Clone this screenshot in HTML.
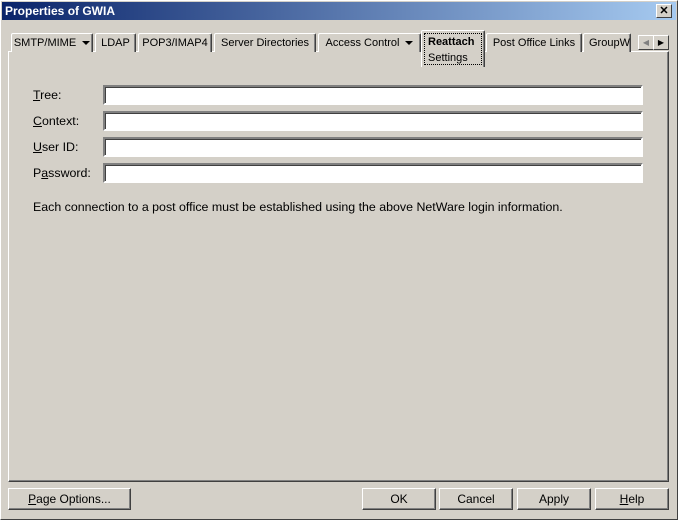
<html><head><style>
body{margin:0;width:678px;height:520px;background:#d4d0c8;font-family:"Liberation Sans",sans-serif;font-size:12.4px;position:relative;overflow:hidden}
.a{position:absolute}
.win{left:0;top:0;width:676px;height:518px;border:1px solid;border-color:#fff #404040 #404040 #fff}
.title{left:2px;top:2px;width:674px;height:18px;background:linear-gradient(90deg,#0a246a,#a6caf0);color:#fff;font-weight:bold;font-size:12px;line-height:18px;text-indent:3px}
.x{left:656px;top:4px;width:14px;height:12px;background:#d4d0c8;border:1px solid;border-color:#fff #404040 #404040 #fff;color:#000;font-size:11px;line-height:12px;text-align:center;font-weight:bold}
.panel{left:8px;top:51px;width:659px;height:429px;border:1px solid;border-color:#fff #404040 #404040 #fff;box-shadow:inset -1px -1px 0 #808080}
.tab{top:33px;height:18px;border:1px solid;border-bottom:none;border-color:#fff #404040 #fff #fff;box-shadow:inset -1px 0 0 #808080;border-radius:2px 2px 0 0;line-height:18px;text-align:center;white-space:nowrap;overflow:hidden;background:#d4d0c8;font-size:11px}
.lbl{left:33px}
.in{left:103px;width:536px;height:16px;background:#fff;border:2px solid;border-color:#808080 #fff #fff #808080;box-shadow:inset 1px 1px 0 #404040}
.btn{top:488px;height:20px;border:1px solid;border-color:#fff #404040 #404040 #fff;box-shadow:inset -1px -1px 0 #808080;text-align:center;line-height:20px;font-size:12px}
u{text-decoration:underline}
.tri{display:inline-block;width:0;height:0;border-left:4px solid transparent;border-right:4px solid transparent;border-top:4px solid #000;margin-left:6px;vertical-align:middle}
</style></head><body>
<div class="a win"></div>
<div class="a title">Properties of GWIA</div>
<div class="a x">✕</div>
<div class="a panel"></div>
<div class="a tab" style="left:11px;width:80px">SMTP/MIME<span class="tri"></span></div>
<div class="a tab" style="left:95px;width:39px">LDAP</div>
<div class="a tab" style="left:138px;width:72px">POP3/IMAP4</div>
<div class="a tab" style="left:214px;width:100px">Server Directories</div>
<div class="a tab" style="left:318px;width:101px">Access Control<span class="tri"></span></div>
<div class="a tab" style="left:421px;top:30px;width:62px;height:36px;line-height:16px;z-index:2;border-bottom:none"><div style="margin:2px;border:1px dotted #000;text-align:left;padding-left:3px;height:30px"><b>Reattach</b><br>Settings</div></div>
<div class="a tab" style="left:486px;width:94px">Post Office Links</div>
<div class="a tab" style="left:583px;text-align:left;padding-left:5px;width:41px">GroupW</div>
<div class="a" style="left:638px;top:35px;width:14px;height:13px;border:1px solid;border-color:#fff #404040 #404040 #fff;color:#808080;font-size:8px;line-height:13px;text-align:center">◀</div>
<div class="a" style="left:653px;top:35px;width:14px;height:13px;border:1px solid;border-color:#fff #404040 #404040 #fff;font-size:8px;line-height:13px;text-align:center">▶</div>
<div class="a lbl" style="top:88px"><u>T</u>ree:</div>
<div class="a lbl" style="top:114px"><u>C</u>ontext:</div>
<div class="a lbl" style="top:140px"><u>U</u>ser ID:</div>
<div class="a lbl" style="top:166px">P<u>a</u>ssword:</div>
<div class="a in" style="top:85px"></div>
<div class="a in" style="top:111px"></div>
<div class="a in" style="top:137px"></div>
<div class="a in" style="top:163px"></div>
<div class="a" style="left:33px;top:200px">Each connection to a post office must be established using the above NetWare login information.</div>
<div class="a btn" style="left:8px;width:121px"><u>P</u>age Options...</div>
<div class="a btn" style="left:362px;width:72px">OK</div>
<div class="a btn" style="left:439px;width:72px">Cancel</div>
<div class="a btn" style="left:517px;width:72px">Apply</div>
<div class="a btn" style="left:595px;width:72px"><u>H</u>elp</div>
</body></html>
